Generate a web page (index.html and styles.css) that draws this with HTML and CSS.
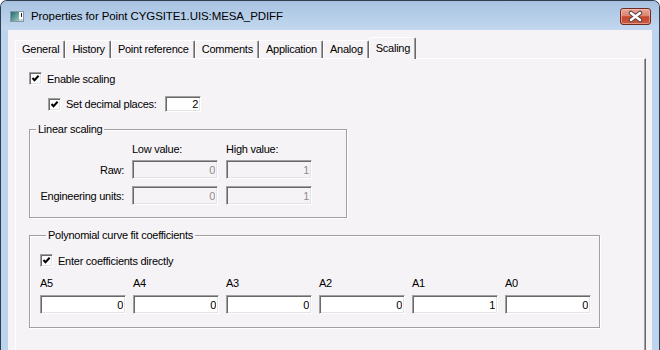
FILE: index.html
```html
<!DOCTYPE html>
<html lang="en">
<head>
    <meta charset="UTF-8">
    <title>Properties for Point CYGSITE1.UIS:MESA_PDIFF</title>
    <link rel="stylesheet" href="styles.css">
</head>
<body>
    <div class="window">
        <div class="titlebar">
            <svg class="app-icon" width="14" height="11" viewBox="0 0 14 11">
                <defs>
                    <linearGradient id="iconFill" x1="0" y1="0" x2="1" y2="1">
                        <stop offset="0" stop-color="#1f6b6e"/>
                        <stop offset="1" stop-color="#9cc9c2"/>
                    </linearGradient>
                </defs>
                <rect x="0.5" y="0.5" width="13" height="10" fill="#fff" stroke="#8a96a3"/>
                <rect x="1" y="1" width="8" height="9" fill="url(#iconFill)"/>
                <rect x="11" y="2" width="1" height="4" fill="#222"/>
                <rect x="9" y="8" width="4" height="2" fill="#c8d2da"/>
            </svg>
            <span class="title">Properties for Point CYGSITE1.UIS:MESA_PDIFF</span>
            <button class="close-btn">
                <svg width="31" height="17" viewBox="0 0 31 17">
                    <path d="M11 5 L20 12 M20 5 L11 12" stroke="#5b4745" stroke-width="4.6" stroke-linecap="round"/>
                    <path d="M11 5 L20 12 M20 5 L11 12" stroke="#fff" stroke-width="2.4" stroke-linecap="round"/>
                </svg>
            </button>
        </div>
        <div class="frame">
            <div class="client">
                <div class="tabs">
                    <div class="tab">General</div>
                    <div class="tab">History</div>
                    <div class="tab">Point reference</div>
                    <div class="tab">Comments</div>
                    <div class="tab">Application</div>
                    <div class="tab">Analog</div>
                    <div class="tab selected">Scaling</div>
                </div>
                <div class="panel">
                    <label class="check-row">
                        <span class="checkbox"><svg width="9" height="9" viewBox="0 0 9 9"><path d="M1.5 4 L3.5 6.2 L7.6 1.8" fill="none" stroke="#000" stroke-width="2"/></svg></span>
                        Enable scaling
                    </label>
                    <div class="decimal-row">
                        <label class="check-row decimal-label">
                            <span class="checkbox"><svg width="9" height="9" viewBox="0 0 9 9"><path d="M1.5 4 L3.5 6.2 L7.6 1.8" fill="none" stroke="#000" stroke-width="2"/></svg></span>
                            Set decimal places:
                        </label>
                        <input class="field decimal-field" type="text" value="2">
                    </div>

                    <fieldset class="group linear-group">
                        <legend>Linear scaling</legend>
                        <div class="linear-grid">
                            <span></span>
                            <span class="col-head">Low value:</span>
                            <span class="col-head">High value:</span>
                            <span class="row-label">Raw:</span>
                            <input class="field" type="text" value="0" disabled>
                            <input class="field" type="text" value="1" disabled>
                            <span class="row-label">Engineering units:</span>
                            <input class="field" type="text" value="0" disabled>
                            <input class="field" type="text" value="1" disabled>
                        </div>
                    </fieldset>

                    <fieldset class="group poly-group">
                        <legend>Polynomial curve fit coefficients</legend>
                        <label class="check-row">
                            <span class="checkbox"><svg width="9" height="9" viewBox="0 0 9 9"><path d="M1.5 4 L3.5 6.2 L7.6 1.8" fill="none" stroke="#000" stroke-width="2"/></svg></span>
                            Enter coefficients directly
                        </label>
                        <div class="coef-grid">
                            <div class="coef"><span>A5</span><input class="field" type="text" value="0"></div>
                            <div class="coef"><span>A4</span><input class="field" type="text" value="0"></div>
                            <div class="coef"><span>A3</span><input class="field" type="text" value="0"></div>
                            <div class="coef"><span>A2</span><input class="field" type="text" value="0"></div>
                            <div class="coef"><span>A1</span><input class="field" type="text" value="1"></div>
                            <div class="coef"><span>A0</span><input class="field" type="text" value="0"></div>
                        </div>
                    </fieldset>
                </div>
            </div>
        </div>
    </div>
</body>
</html>
```
FILE: styles.css
```css
html, body {
    margin: 0;
    height: 350px;
    overflow: hidden;
}

body {
    background: #fff;
    font-family: "Liberation Sans", Arial, sans-serif;
    font-size: 11px;
    letter-spacing: -0.25px;
    color: #000;
}

.window {
    width: 660px;
    height: 372px;
    box-sizing: border-box;
    border: 1px solid #2f3d4f;
    border-bottom: 0;
    border-radius: 7px 7px 0 0;
    overflow: hidden;
    display: flex;
    flex-direction: column;
    background: #bdd4ee;
}

/* title bar */
.titlebar {
    height: 29px;
    flex: none;
    display: flex;
    align-items: center;
    padding: 0 8px 0 9px;
    background: linear-gradient(#a7c2e1, #c3d8ef);
}

.app-icon {
    flex: none;
    margin-top: 1px;
}

.title {
    margin-left: 7px;
    font-size: 11.5px;
    letter-spacing: -0.1px;
    color: #000;
    padding-top: 1px;
}

.close-btn {
    margin-left: auto;
    width: 31px;
    height: 17px;
    padding: 0;
    margin-top: 1px;
    border: 1px solid #6f2a22;
    border-radius: 3px;
    background: linear-gradient(#e9a797 0%, #dc8470 45%, #c7452d 52%, #cd5a3f 100%);
    box-shadow: inset 0 0 0 1px rgba(255, 210, 200, 0.5);
    display: flex;
    align-items: center;
    justify-content: center;
}

.close-btn svg {
    display: block;
    margin: -1px;
}

/* window body */
.frame {
    flex: 1;
    padding: 0 7px;
    display: flex;
}

.client {
    flex: 1;
    background: #f6f3f6;
    padding: 7px 6px 0 7px;
    display: flex;
    flex-direction: column;
}

.tabs {
    display: flex;
    align-items: flex-end;
    height: 21px;
    flex: none;
}

.tab {
    height: 18px;
    box-sizing: border-box;
    padding: 0 5px 1px 6px;
    border-top: 1px solid #fff;
    border-left: 1px solid #fff;
    border-right: 1px solid #696969;
    box-shadow: inset -1px 0 #a0a0a0;
    border-radius: 2px 2px 0 0;
    display: flex;
    align-items: center;
    white-space: nowrap;
}

.tab.selected {
    height: 22px;
    margin-bottom: -1px;
    padding-bottom: 2px;
    position: relative;
    z-index: 1;
    background: #f6f3f6;
}

.panel {
    flex: 1;
    border-top: 1px solid #fff;
    border-left: 1px solid #fff;
    border-right: 1px solid #696969;
    box-shadow: inset -1px 0 #a0a0a0;
    padding: 13px 0 0 13px;
    display: flex;
    flex-direction: column;
    align-items: flex-start;
}

/* checkboxes */
.check-row {
    display: flex;
    align-items: center;
    gap: 5px;
    height: 13px;
    white-space: nowrap;
}

.checkbox {
    width: 13px;
    height: 13px;
    box-sizing: border-box;
    flex: none;
    background: #fff;
    border: 1px solid;
    border-color: #a0a0a0 #fff #fff #a0a0a0;
    box-shadow: inset 1px 1px #696969, inset -1px -1px #e3e3e3;
    display: flex;
    align-items: center;
    justify-content: center;
}

.checkbox svg {
    display: block;
}

/* text fields */
.field {
    box-sizing: border-box;
    width: 86px;
    height: 19px;
    margin: 0;
    padding: 0 2px 0 0;
    font-family: inherit;
    font-size: 11px;
    letter-spacing: inherit;
    text-align: right;
    color: #000;
    background: #fff;
    border: 1px solid;
    border-color: #a0a0a0 #fff #fff #a0a0a0;
    box-shadow: inset 1px 1px #696969, inset -1px -1px #e3e3e3;
    outline: none;
}

.field:disabled {
    background: #f6f3f6;
    color: #8e8e8e;
}

.decimal-row {
    display: flex;
    align-items: center;
    margin: 11px 0 0 19px;
    height: 16px;
}

.decimal-label {
    width: 117px;
}

.decimal-field {
    width: 36px;
    height: 16px;
}

/* group boxes */
.group {
    margin: 11px 0 0 0;
    padding: 0;
    min-width: 0;
    border: 1px solid #a0a0a0;
    box-shadow: inset 1px 1px #fff, 1px 1px #fff;
}

.group legend {
    margin-left: 6px;
    padding: 0 2px;
    line-height: 13px;
}

.linear-group {
    width: 318px;
    box-sizing: border-box;
}

.linear-grid {
    display: grid;
    grid-template-columns: 94px 86px 86px;
    grid-template-rows: 10px 19px 19px;
    column-gap: 8px;
    row-gap: 7px;
    padding: 7px 0 12px 0;
}

.col-head {
    line-height: 13px;
}

.row-label {
    text-align: right;
    align-self: center;
    white-space: nowrap;
}

.poly-group {
    width: 571px;
    box-sizing: border-box;
    padding: 12px 0 13px 10px;
}

.coef-grid {
    display: grid;
    grid-template-columns: repeat(6, 86px);
    column-gap: 7px;
    margin-top: 10px;
}

.coef {
    display: flex;
    flex-direction: column;
    gap: 5px;
}

.coef span {
    line-height: 13px;
}
```
